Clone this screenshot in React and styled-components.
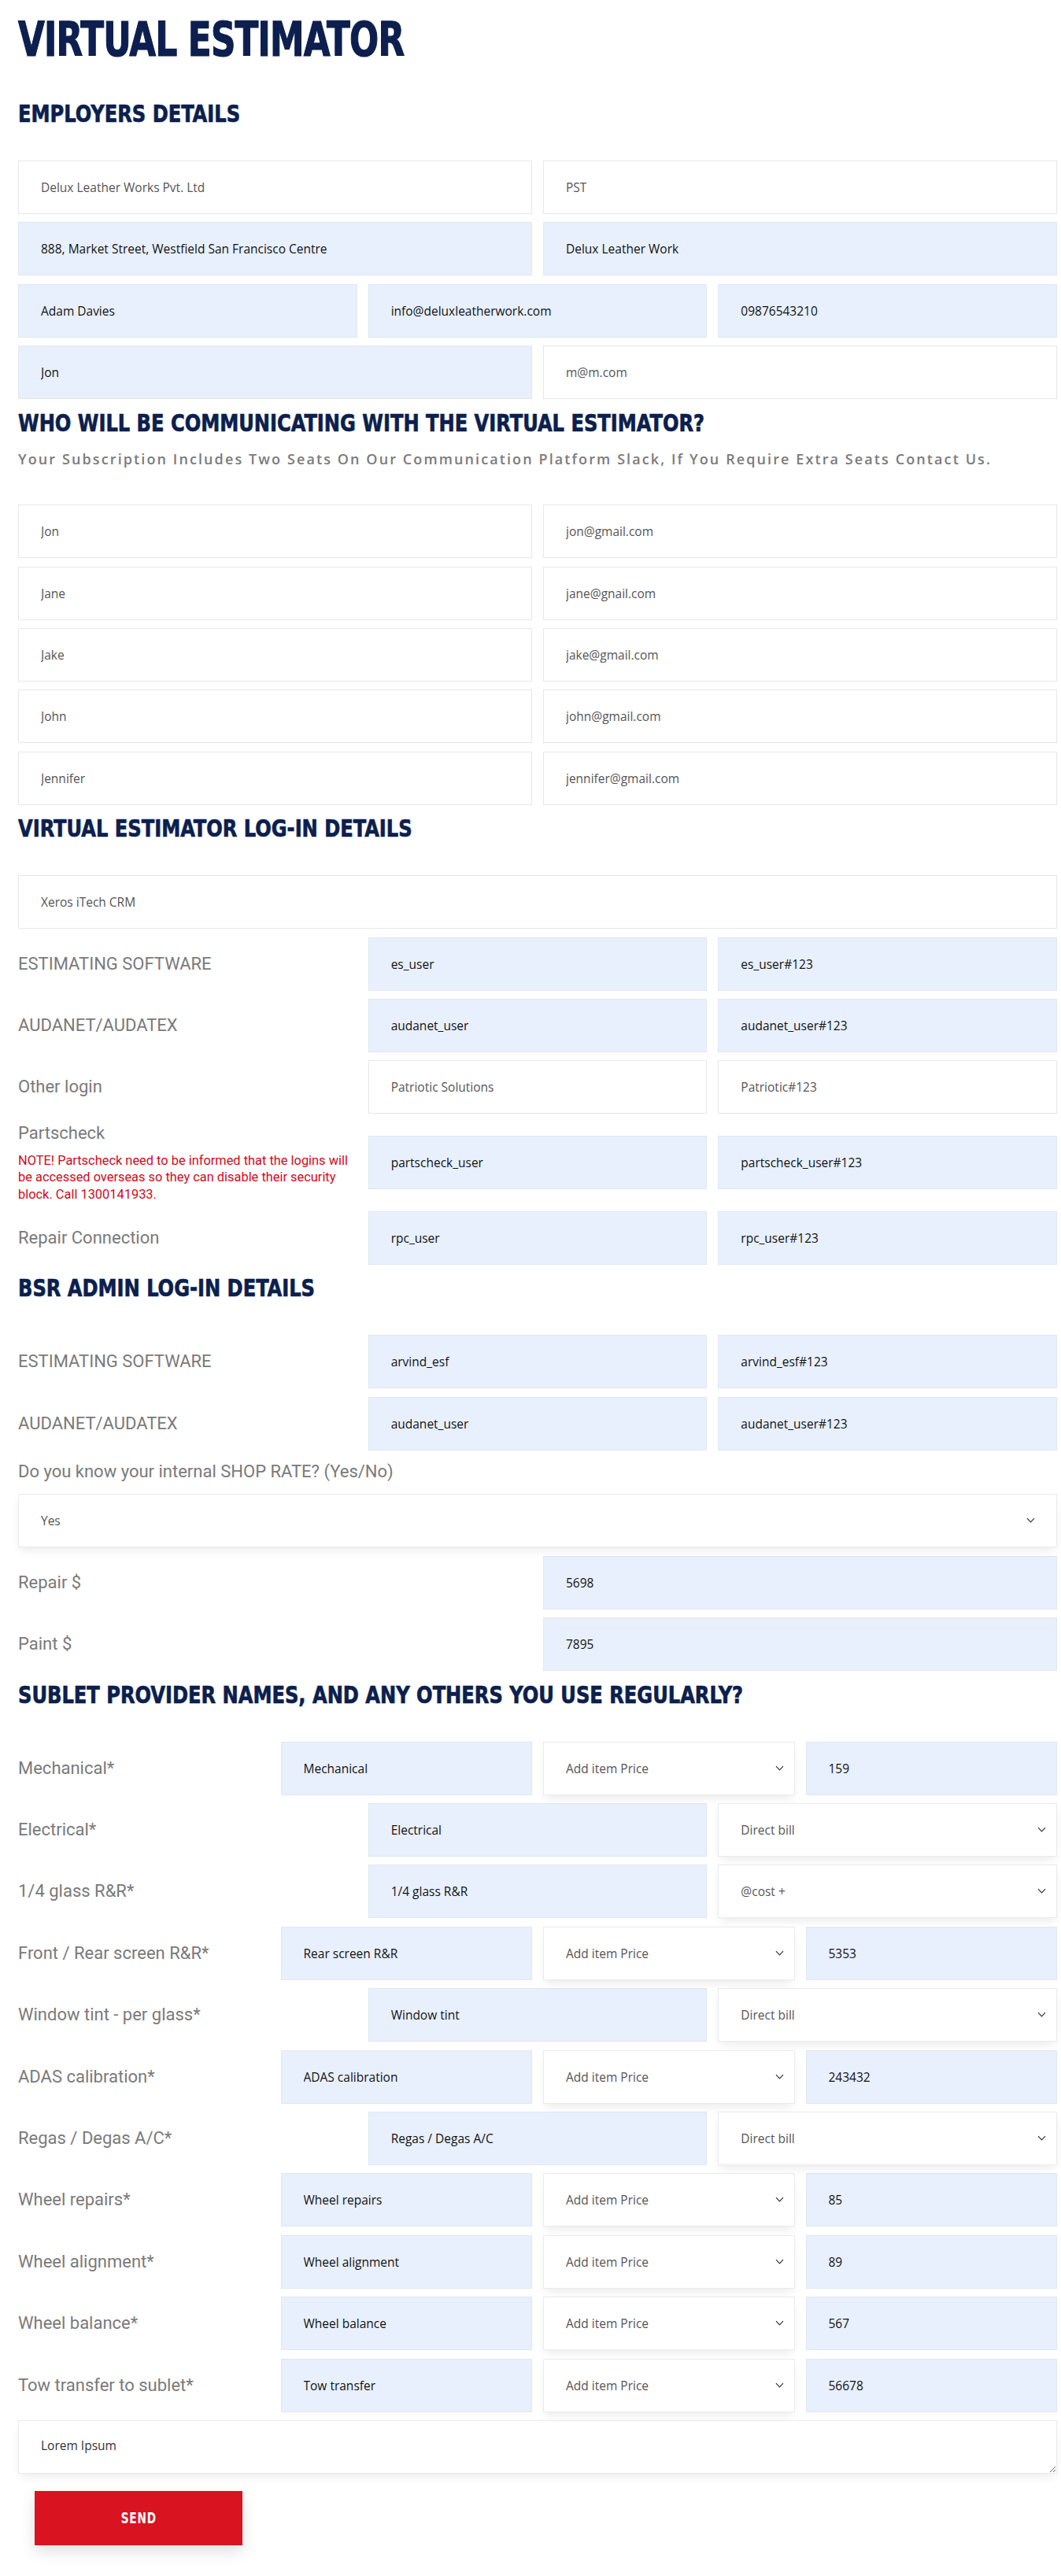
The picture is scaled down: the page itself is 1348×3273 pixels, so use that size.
import React from "react";
import styled, { createGlobalStyle } from "styled-components";

const GlobalStyle = createGlobalStyle`
  html, body { margin: 0; padding: 0; background: #ffffff; }
  body { font-family: "Open Sans", "Noto Sans", sans-serif; }
  *, *::before, *::after { box-sizing: border-box; }
`;

const display = `"DejaVu Sans Condensed", "DejaVu Sans", sans-serif`;

const Page = styled.main`
  width: 1320px;
  margin-left: 23px;
  padding: 20px 0 40px;
`;

/* Condensed display lettering: the bold face squeezed horizontally */
const Title = styled.h1`
  margin: 0;
  font-family: ${display};
  font-weight: 700;
  font-size: 60px;
  line-height: 60px;
  letter-spacing: -1px;
  color: #0c1f4e;
  -webkit-text-stroke: 1.2px #0c1f4e;
  text-transform: uppercase;
  transform: scaleX(0.81);
  transform-origin: left center;
  white-space: nowrap;
`;

const SectionTitle = styled.h2`
  margin: ${(p) => (p.$first ? "45px" : "10.5px")} 0 ${(p) => (p.$tight ? "13.5px" : "41px")};
  font-family: ${display};
  font-weight: 700;
  font-size: 31px;
  line-height: 38px;
  color: #0c1f4e;
  -webkit-text-stroke: 0.7px #0c1f4e;
  text-transform: uppercase;
  transform: scaleX(0.866);
  transform-origin: left center;
  white-space: nowrap;
`;

const Lead = styled.p`
  margin: 0 0 44px;
  font-family: "Open Sans", sans-serif;
  font-weight: 600;
  font-size: 18px;
  line-height: 28px;
  letter-spacing: 2.1px;
  color: #7b7b7b;
  white-space: nowrap;
`;

const Stack = styled.div`
  display: flex;
  flex-direction: column;
  gap: 10.4px;
`;

const Row = styled.div`
  display: grid;
  grid-template-columns: repeat(${(p) => p.$cols || 2}, minmax(0, 1fr));
  column-gap: 14px;
  align-items: center;
`;

const Field = styled.input`
  display: block;
  width: 100%;
  height: 68px;
  padding: 0 28px;
  border: 1px solid ${(p) => (p.$filled ? "#e1e7f1" : "#e7e7e9")};
  border-radius: 0;
  background: ${(p) => (p.$filled ? "#e8f0fe" : "#ffffff")};
  font-family: "Open Sans", sans-serif;
  font-size: 15.5px;
  color: ${(p) => (p.$filled ? "#111111" : "#555555")};
  outline: none;
`;

const Label = styled.div`
  font-family: Roboto, "Liberation Sans", sans-serif;
  font-size: 22px;
  line-height: 28px;
  color: #7a7a7a;
  white-space: nowrap;
`;

const Question = styled(Label)`
  padding: 3px 0 4px;
`;

const LabelBlock = styled.div`
  display: flex;
  flex-direction: column;
`;

const Note = styled.p`
  margin: 10px 0 0;
  font-family: Roboto, "Liberation Sans", sans-serif;
  font-size: 16.4px;
  line-height: 21.5px;
  color: #d10a1a;
  white-space: nowrap;
`;

const SelectWrap = styled.div`
  position: relative;
  width: 100%;
`;

const Select = styled.select`
  display: block;
  width: 100%;
  height: 68px;
  padding: 0 44px 0 28px;
  appearance: none;
  -webkit-appearance: none;
  border: 1px solid #ebebee;
  border-radius: 0;
  background: #ffffff;
  box-shadow: 0 6px 12px -3px rgba(0, 0, 0, 0.09);
  font-family: "Open Sans", sans-serif;
  font-size: 15.5px;
  color: #555555;
  outline: none;
`;

const Chevron = styled.svg`
  position: absolute;
  right: ${(p) => p.$inset}px;
  top: 50%;
  width: 11px;
  height: 7px;
  margin-top: -4px;
  pointer-events: none;
`;

const Notes = styled.textarea`
  display: block;
  width: 100%;
  height: 68px;
  padding: 20px 28px;
  border: 1px solid #ebebee;
  border-radius: 0;
  background: #ffffff;
  box-shadow: 0 6px 12px -3px rgba(0, 0, 0, 0.09);
  font-family: "Open Sans", sans-serif;
  font-size: 15.5px;
  color: #333333;
  outline: none;
`;

const SendButton = styled.button`
  display: flex;
  align-items: center;
  justify-content: center;
  margin: 22px 0 0 21px;
  width: 264px;
  height: 69px;
  border: none;
  background: #d9131f;
  box-shadow: 0 8px 18px rgba(0, 0, 0, 0.12);
  cursor: pointer;
`;

const ButtonText = styled.span`
  display: inline-block;
  color: #ffffff;
  font-family: ${display};
  font-weight: 700;
  font-size: 19px;
  letter-spacing: 1px;
  text-transform: uppercase;
  transform: scaleX(0.8);
`;

const Dropdown = ({ value, options, inset = 14 }) => (
  <SelectWrap>
    <Select defaultValue={value}>
      {options.map((o) => (
        <option key={o}>{o}</option>
      ))}
    </Select>
    <Chevron viewBox="0 0 11 7" fill="none" $inset={inset}>
      <path d="M1 1.2l4.5 4.6 4.5-4.6" stroke="#333" strokeWidth="1.2" />
    </Chevron>
  </SelectWrap>
);

const Input = ({ value, filled }) => <Field defaultValue={value} $filled={filled} />;

const community = [
  ["Jon", "jon@gmail.com"],
  ["Jane", "jane@gnail.com"],
  ["Jake", "jake@gmail.com"],
  ["John", "john@gmail.com"],
  ["Jennifer", "jennifer@gmail.com"],
];

const billing = ["Add item Price", "Direct bill", "@cost +"];

const sublets = [
  ["Mechanical*", "Mechanical", "Add item Price", "159"],
  ["Electrical*", "Electrical", "Direct bill"],
  ["1/4 glass R&R*", "1/4 glass R&R", "@cost +"],
  ["Front / Rear screen R&R*", "Rear screen R&R", "Add item Price", "5353"],
  ["Window tint - per glass*", "Window tint", "Direct bill"],
  ["ADAS calibration*", "ADAS calibration", "Add item Price", "243432"],
  ["Regas / Degas A/C*", "Regas / Degas A/C", "Direct bill"],
  ["Wheel repairs*", "Wheel repairs", "Add item Price", "85"],
  ["Wheel alignment*", "Wheel alignment", "Add item Price", "89"],
  ["Wheel balance*", "Wheel balance", "Add item Price", "567"],
  ["Tow transfer to sublet*", "Tow transfer", "Add item Price", "56678"],
];

export default function App() {
  return (
    <>
      <GlobalStyle />
      <Page>
        <Title>Virtual Estimator</Title>

        <SectionTitle $first>Employers Details</SectionTitle>
        <Stack>
          <Row $cols={2}>
            <Input value="Delux Leather Works Pvt. Ltd" />
            <Input value="PST" />
          </Row>
          <Row $cols={2}>
            <Input value="888, Market Street, Westfield San Francisco Centre" filled />
            <Input value="Delux Leather Work" filled />
          </Row>
          <Row $cols={3}>
            <Input value="Adam Davies" filled />
            <Input value="info@deluxleatherwork.com" filled />
            <Input value="09876543210" filled />
          </Row>
          <Row $cols={2}>
            <Input value="Jon" filled />
            <Input value="m@m.com" />
          </Row>
        </Stack>

        <SectionTitle $tight>Who will be communicating with the virtual estimator?</SectionTitle>
        <Lead>
          Your Subscription Includes Two Seats On Our Communication Platform Slack, If You Require
          Extra Seats Contact Us.
        </Lead>
        <Stack>
          {community.map(([name, email]) => (
            <Row $cols={2} key={name}>
              <Input value={name} />
              <Input value={email} />
            </Row>
          ))}
        </Stack>

        <SectionTitle>Virtual Estimator Log-in Details</SectionTitle>
        <Stack>
          <Row $cols={1}>
            <Input value="Xeros iTech CRM" />
          </Row>
          <Row $cols={3}>
            <Label>ESTIMATING SOFTWARE</Label>
            <Input value="es_user" filled />
            <Input value="es_user#123" filled />
          </Row>
          <Row $cols={3}>
            <Label>AUDANET/AUDATEX</Label>
            <Input value="audanet_user" filled />
            <Input value="audanet_user#123" filled />
          </Row>
          <Row $cols={3}>
            <Label>Other login</Label>
            <Input value="Patriotic Solutions" />
            <Input value="Patriotic#123" />
          </Row>
          <Row $cols={3}>
            <LabelBlock>
              <Label>Partscheck</Label>
              <Note>
                NOTE! Partscheck need to be informed that the logins will
                <br />
                be accessed overseas so they can disable their security
                <br />
                block. Call 1300141933.
              </Note>
            </LabelBlock>
            <Input value="partscheck_user" filled />
            <Input value="partscheck_user#123" filled />
          </Row>
          <Row $cols={3}>
            <Label>Repair Connection</Label>
            <Input value="rpc_user" filled />
            <Input value="rpc_user#123" filled />
          </Row>
        </Stack>

        <SectionTitle>BSR Admin Log-in Details</SectionTitle>
        <Stack>
          <Row $cols={3}>
            <Label>ESTIMATING SOFTWARE</Label>
            <Input value="arvind_esf" filled />
            <Input value="arvind_esf#123" filled />
          </Row>
          <Row $cols={3}>
            <Label>AUDANET/AUDATEX</Label>
            <Input value="audanet_user" filled />
            <Input value="audanet_user#123" filled />
          </Row>
          <Question>Do you know your internal SHOP RATE? (Yes/No)</Question>
          <Row $cols={1}>
            <Dropdown value="Yes" options={["Yes", "No"]} inset={28} />
          </Row>
          <Row $cols={2}>
            <Label>Repair $</Label>
            <Input value="5698" filled />
          </Row>
          <Row $cols={2}>
            <Label>Paint $</Label>
            <Input value="7895" filled />
          </Row>
        </Stack>

        <SectionTitle>Sublet provider names, and any others you use regularly?</SectionTitle>
        <Stack>
          {sublets.map(([label, name, mode, price]) => (
            <Row $cols={price ? 4 : 3} key={label}>
              <Label>{label}</Label>
              <Input value={name} filled />
              <Dropdown value={mode} options={billing} />
              {price && <Input value={price} filled />}
            </Row>
          ))}
          <Notes defaultValue="Lorem Ipsum" />
        </Stack>

        <SendButton type="button">
          <ButtonText>Send</ButtonText>
        </SendButton>
      </Page>
    </>
  );
}
